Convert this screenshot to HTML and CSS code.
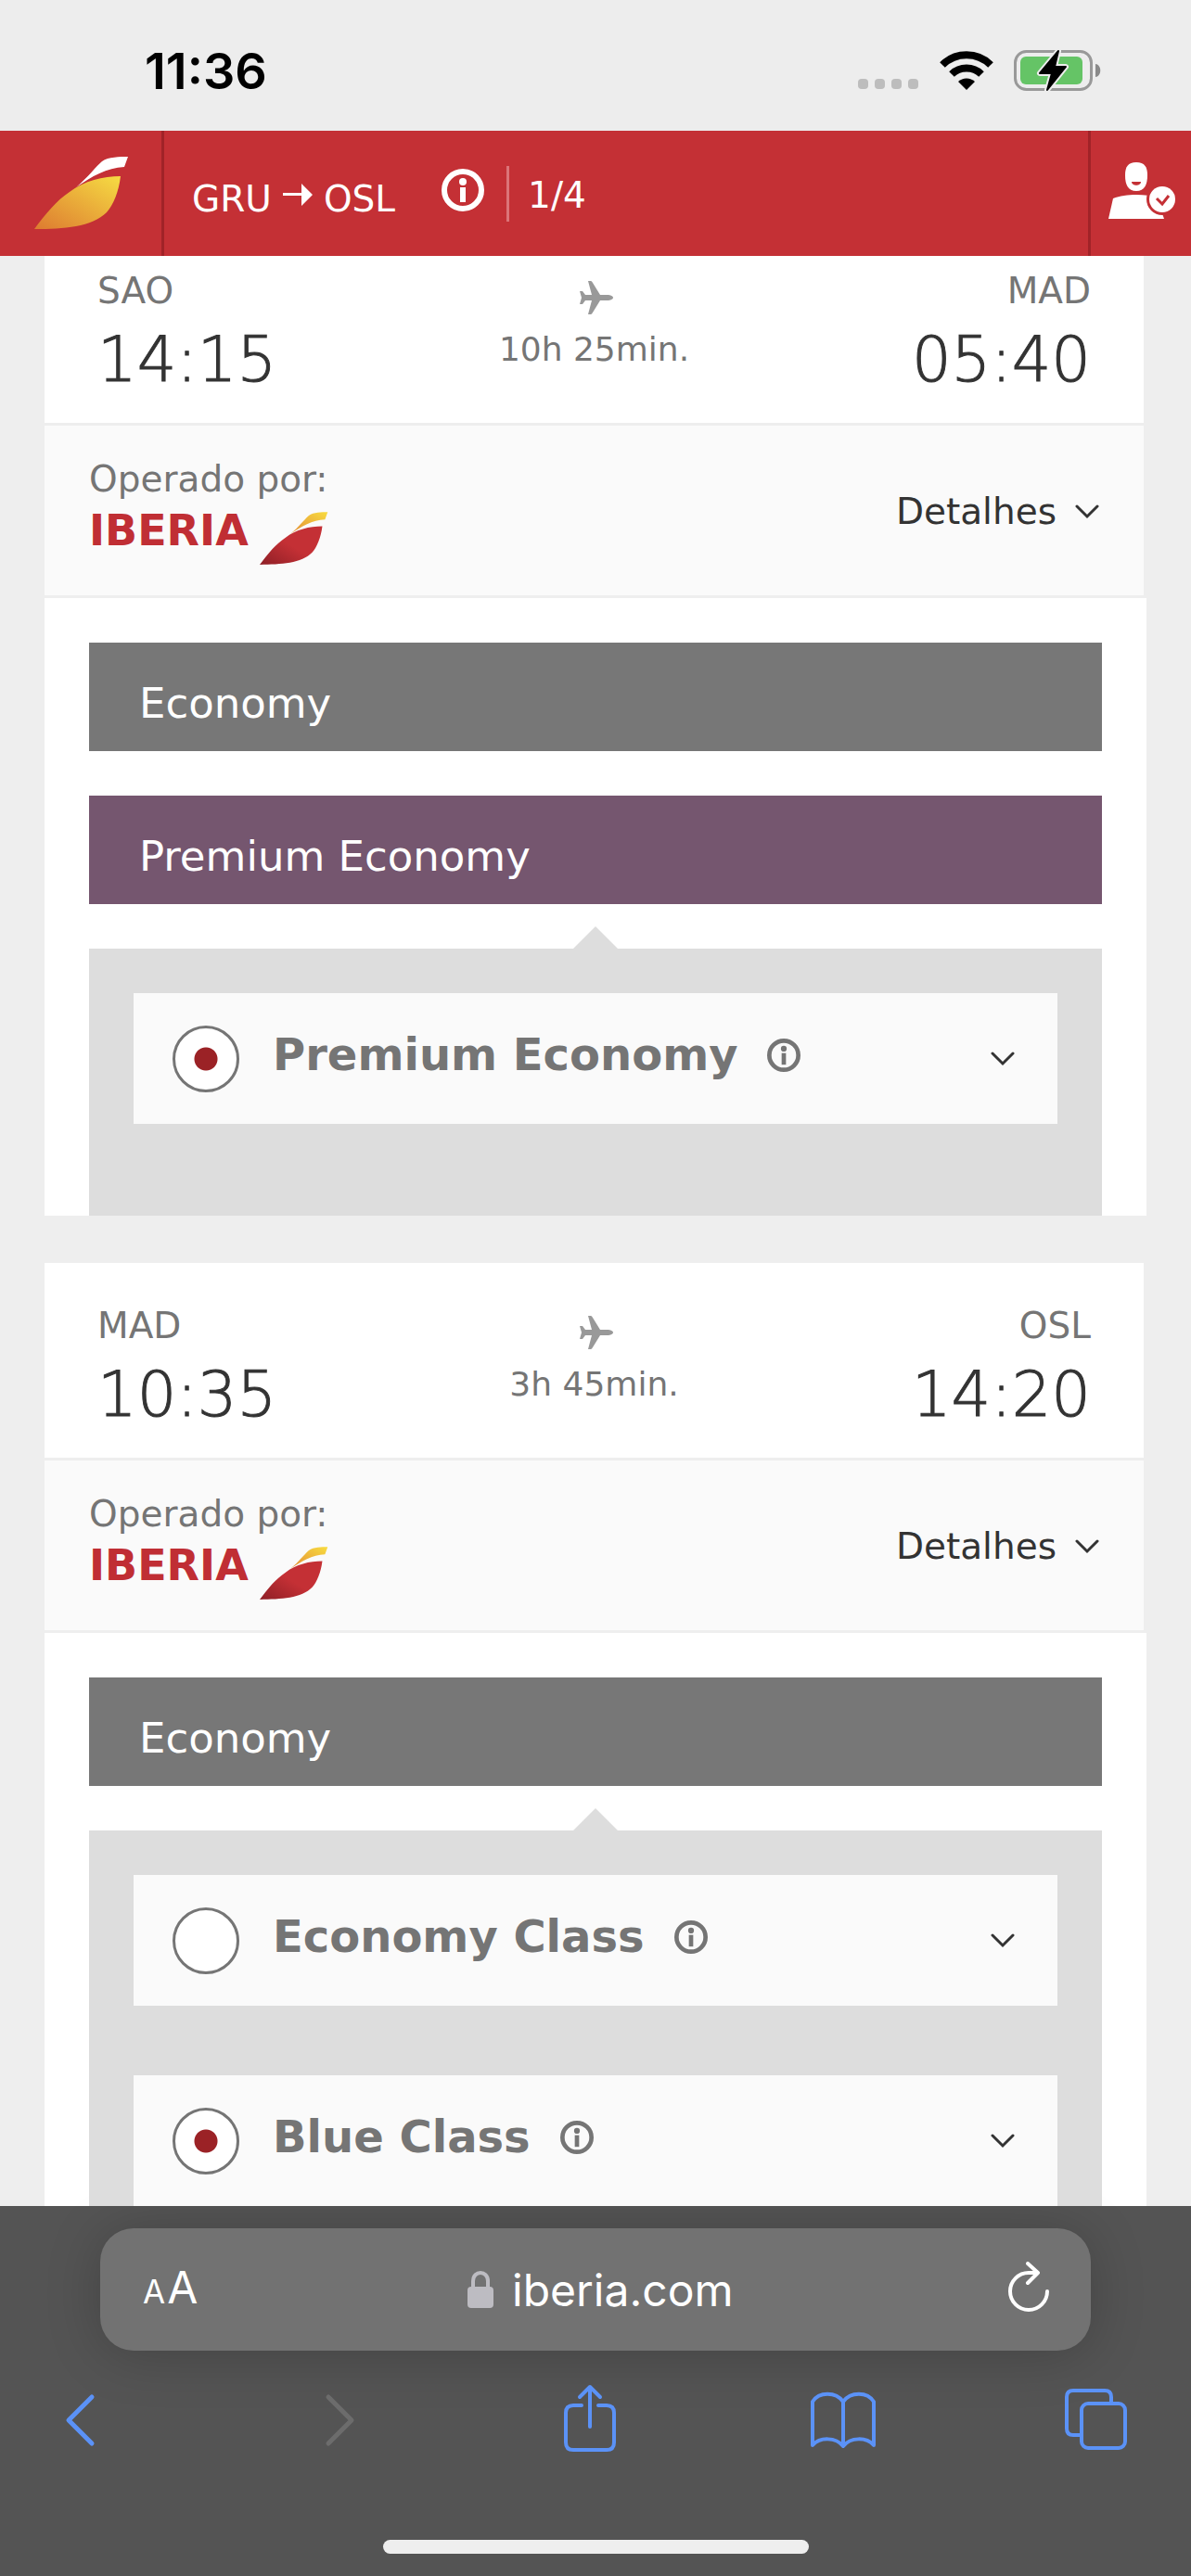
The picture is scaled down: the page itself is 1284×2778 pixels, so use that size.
FILE: index.html
```html
<!DOCTYPE html>
<html lang="pt">

<head>
    <meta charset="UTF-8">
    <meta name="viewport" content="width=device-width, initial-scale=1.0">
    <title>Iberia</title>
    <link rel="stylesheet" href="styles.css">
</head>

<body>
    <!-- shared icons -->
    <svg class="symbols" aria-hidden="true">
        <defs>
            <linearGradient id="gold" x1="0" y1="1" x2="1" y2="0">
                <stop offset="0" stop-color="#dd7a30" />
                <stop offset="1" stop-color="#f6dc43" />
            </linearGradient>
            <linearGradient id="red" x1="0" y1="1" x2="1" y2="0">
                <stop offset="0" stop-color="#8e1f26" />
                <stop offset="0.5" stop-color="#c43035" />
                <stop offset="1" stop-color="#c43035" />
            </linearGradient>
            <linearGradient id="yellow" x1="0" y1="1" x2="1" y2="0">
                <stop offset="0" stop-color="#e28a35" />
                <stop offset="1" stop-color="#f8dc40" />
            </linearGradient>
        </defs>
        <symbol id="info" viewBox="0 0 46 46">
            <circle cx="23" cy="23" r="20" fill="none" stroke="currentColor" stroke-width="6" />
            <circle cx="23" cy="14" r="4" fill="currentColor" />
            <path d="M20 20h6v16h-6z" fill="currentColor" />
        </symbol>
        <symbol id="chevron" viewBox="0 0 26 16">
            <path d="M2 2l11 11L24 2" fill="none" stroke="currentColor" stroke-width="3" stroke-linecap="round" />
        </symbol>
        <symbol id="plane" viewBox="0 0 40 36">
            <path d="M13 0h3q1 0 2 2l8 13h9q5 1 5 3t-5 3h-9l-8 13q-1 2-2 2h-3l4-15h-7l-3 4H4l2-7-2-7h3l3 4h7z" fill="#999" />
        </symbol>
        <symbol id="leaf" viewBox="0 0 102 79">
            <path d="M45 33C58 22 66 11 73 5 80 0 92 0 101 0l-4 11C78 12 62 21 45 33z" fill="url(#yellow)" />
            <path d="M0 78C12 62 24 47 38 38 54 26 74 21 93 21 91 38 85 52 78 60 62 76 32 78 0 78z" fill="url(#red)" />
        </symbol>
    </svg>

    <div class="status-bar">
        <span class="clock">11:36</span>
        <div class="status-icons">
            <svg width="66" height="44" viewBox="0 0 66 44" fill="#bdbdbd">
                <rect x="0" y="31" width="11" height="11" rx="4" />
                <rect x="18" y="31" width="11" height="11" rx="4" />
                <rect x="36" y="31" width="11" height="11" rx="4" />
                <rect x="54" y="31" width="11" height="11" rx="4" />
            </svg>
            <svg width="58" height="44" viewBox="0 0 58 44">
                <path d="M3 16a37 37 0 0 1 52 0" fill="none" stroke="#000" stroke-width="8" />
                <path d="M13 26a23 23 0 0 1 32 0" fill="none" stroke="#000" stroke-width="8" />
                <path d="M20 34a13 13 0 0 1 18 0l-9 9z" />
            </svg>
            <svg width="95" height="46" viewBox="0 0 95 46">
                <rect x="1.5" y="2.5" width="82" height="41" rx="12" fill="none" stroke="#999" stroke-width="3" />
                <rect x="7" y="8" width="67" height="30" rx="6" fill="#65c466" />
                <path d="M88 16c7 1 7 13 0 14z" fill="#8a8a8a" />
                <path d="M48 2L28 26h13l-5 18 20-25H44z" fill="#000" stroke="#ededed" stroke-width="6" stroke-linejoin="round" />
                <path d="M48 2L28 26h13l-5 18 20-25H44z" fill="#000" stroke="#000" stroke-width="2" stroke-linejoin="round" />
            </svg>
        </div>
    </div>

    <header class="site-header">
        <a href="#" class="home" aria-label="Iberia">
            <svg width="102" height="79" viewBox="0 0 102 79">
                <path d="M45 33C58 22 66 11 73 5 80 0 92 0 101 0l-4 11C78 12 62 21 45 33z" fill="#fff" />
                <path d="M0 78C12 62 24 47 38 38 54 26 74 21 93 21 91 38 85 52 78 60 62 76 32 78 0 78z" fill="url(#gold)" />
            </svg>
        </a>
        <div class="trip">
            <div class="route">
                <span>GRU</span>
                <svg width="32" height="24" viewBox="0 0 32 24" fill="#fff">
                    <path d="M0 10h20V0l12 12-12 12V13H0z" />
                </svg>
                <span>OSL</span>
            </div>
            <button class="trip-info" aria-label="Info"><svg width="46" height="46"><use href="#info" /></svg></button>
            <span class="step">1/4</span>
        </div>
        <a href="#" class="user" aria-label="User">
            <svg width="74" height="62" viewBox="0 0 74 62">
                <path d="M30 0C39 0 42 5 42 14 42 24 39 31 30 31S18 24 18 14C18 5 21 0 30 0z" fill="#fff" />
                <path d="M25 21h10c0 5-10 5-10 0z" fill="#c43035" />
                <path d="M0 61L5 39C18 34 40 34 52 38L60 61z" fill="#fff" />
                <circle cx="58" cy="40" r="17" fill="#c43035" />
                <circle cx="58" cy="40" r="14" fill="#fff" />
                <path d="M52 39l6 6 7-9" fill="none" stroke="#c43035" stroke-width="3" />
            </svg>
        </a>
    </header>

    <main>
        <section class="leg scrolled">
            <div class="times">
                <div class="place">
                    <span class="airport">SAO</span>
                    <span class="time">14:15</span>
                </div>
                <div class="duration">
                    <svg width="40" height="36"><use href="#plane" /></svg>
                    <span>10h 25min.</span>
                </div>
                <div class="place arrival">
                    <span class="airport">MAD</span>
                    <span class="time">05:40</span>
                </div>
            </div>
            <div class="operator">
                <div class="company">
                    <span>Operado por:</span>
                    <div class="logo">
                        <span>IBERIA</span>
                        <svg width="74" height="58"><use href="#leaf" /></svg>
                    </div>
                </div>
                <button class="details">Detalhes <svg width="26" height="16"><use href="#chevron" /></svg></button>
            </div>
            <div class="cabins">
                <button class="cabin">Economy</button>
                <button class="cabin premium">Premium Economy</button>
                <div class="fares">
                    <div class="fare">
                        <input type="radio" name="leg1" id="premium-economy" checked>
                        <label for="premium-economy">Premium Economy</label>
                        <button class="fare-info" aria-label="Info"><svg width="36" height="36"><use href="#info" /></svg></button>
                        <button class="fare-open" aria-label="Abrir"><svg width="26" height="16"><use href="#chevron" /></svg></button>
                    </div>
                </div>
            </div>
        </section>

        <section class="leg">
            <div class="times">
                <div class="place">
                    <span class="airport">MAD</span>
                    <span class="time">10:35</span>
                </div>
                <div class="duration">
                    <svg width="40" height="36"><use href="#plane" /></svg>
                    <span>3h 45min.</span>
                </div>
                <div class="place arrival">
                    <span class="airport">OSL</span>
                    <span class="time">14:20</span>
                </div>
            </div>
            <div class="operator">
                <div class="company">
                    <span>Operado por:</span>
                    <div class="logo">
                        <span>IBERIA</span>
                        <svg width="74" height="58"><use href="#leaf" /></svg>
                    </div>
                </div>
                <button class="details">Detalhes <svg width="26" height="16"><use href="#chevron" /></svg></button>
            </div>
            <div class="cabins">
                <button class="cabin">Economy</button>
                <div class="fares">
                    <div class="fare">
                        <input type="radio" name="leg2" id="economy-class">
                        <label for="economy-class">Economy Class</label>
                        <button class="fare-info" aria-label="Info"><svg width="36" height="36"><use href="#info" /></svg></button>
                        <button class="fare-open" aria-label="Abrir"><svg width="26" height="16"><use href="#chevron" /></svg></button>
                    </div>
                    <div class="fare">
                        <input type="radio" name="leg2" id="blue-class" checked>
                        <label for="blue-class">Blue Class</label>
                        <button class="fare-info" aria-label="Info"><svg width="36" height="36"><use href="#info" /></svg></button>
                        <button class="fare-open" aria-label="Abrir"><svg width="26" height="16"><use href="#chevron" /></svg></button>
                    </div>
                </div>
            </div>
        </section>
    </main>

    <footer class="browser-bar">
        <div class="address">
            <button class="text-size"><small>A</small>A</button>
            <div class="url">
                <svg width="28" height="40" viewBox="0 0 28 40">
                    <path d="M6 18v-7c0-12 16-12 16 0v7" fill="none" stroke="#bdbcc2" stroke-width="4" />
                    <rect x="0" y="17" width="28" height="23" rx="4" fill="#bdbcc2" />
                </svg>
                <input type="text" value="iberia.com" aria-label="URL">
            </div>
            <button class="reload" aria-label="Reload">
                <svg width="46" height="56" viewBox="0 0 46 56" fill="none" stroke="#fff" stroke-width="4" stroke-linecap="round" stroke-linejoin="round">
                    <path d="M43 32a20 20 0 1 1-20-20h9M22 2l11 10-11 11" />
                </svg>
            </button>
        </div>
        <nav class="tools">
            <button aria-label="Back"><svg width="80" height="80" viewBox="0 0 80 80"><path d="M53 15L28 40l25 25" stroke-width="5" /></svg></button>
            <button class="off" aria-label="Forward" disabled><svg width="80" height="80" viewBox="0 0 80 80"><path d="M34 15l25 25-25 25" stroke-width="5" /></svg></button>
            <button aria-label="Share"><svg width="80" height="80" viewBox="0 0 80 80"><path d="M33 24h-9q-8 0-8 8v32q0 8 8 8h36q8 0 8-8V32q0-8-8-8h-9M42 47V4M31 15L42 4l11 11" /></svg></button>
            <button aria-label="Bookmarks"><svg width="80" height="80" viewBox="0 0 80 80"><path d="M41 20C33 9 15 9 8 20v47c8-9 25-9 33 1V20c8-11 26-11 33 0v47c-8-9-25-9-33 1" /></svg></button>
            <button aria-label="Tabs"><svg width="80" height="80" viewBox="0 0 80 80"><path d="M22 56h-7q-7 0-7-7V15q0-7 7-7h34q7 0 7 7v7" /><rect x="24" y="22" width="47" height="48" rx="7" /></svg></button>
        </nav>
        <div class="home-indicator"></div>
    </footer>
</body>

</html>
```
FILE: styles.css
```css
* {
    margin: 0;
    padding: 0;
    box-sizing: border-box;
}

body {
    display: flex;
    flex-direction: column;
    height: 100vh;
    font-family: Verdana, "DejaVu Sans", sans-serif;
    font-size: 39px;
    line-height: 48px;
    color: #757575;
    background-color: #eee;
}

button {
    border: none;
    background: none;
    font: inherit;
    color: inherit;
}

a {
    text-decoration: none;
}

svg {
    display: block;
    flex-shrink: 0;
}

.symbols {
    position: absolute;
    width: 0;
    height: 0;
}

/* phone status bar */
.status-bar {
    display: flex;
    flex-shrink: 0;
    justify-content: space-between;
    align-items: center;
    height: 141px;
    padding: 10px 96px 0 156px;
    background-color: #ededed;
}

.clock {
    padding-top: 2px;
    font-family: Inter, sans-serif;
    font-size: 54px;
    font-weight: 600;
    color: #000;
}

.status-icons {
    display: flex;
    align-items: center;
    gap: 22px;
}

/* red header */
.site-header {
    display: flex;
    flex-shrink: 0;
    height: 135px;
    color: #fff;
    background-color: #c43035;
}

.home {
    display: flex;
    align-items: center;
    width: 177px;
    padding-left: 37px;
    border-right: 3px solid #a12328;
}

.trip {
    display: flex;
    flex: 1;
    align-items: center;
    padding-left: 30px;
}

.route {
    display: flex;
    align-items: center;
    gap: 12px;
    padding-top: 12px;
}

.route svg {
    margin-bottom: 9px;
}

.trip-info {
    margin: 0 24px 8px 50px;
}

.step {
    padding: 8px 0 4px 20px;
    border-left: 3px solid #dc7478;
}

.user {
    display: flex;
    align-items: center;
    justify-content: center;
    width: 111px;
    padding: 0 0 6px 3px;
    border-left: 3px solid #a12328;
}

/* flight legs */
main {
    flex: 1;
    min-height: 0;
    padding: 0 48px;
    overflow: hidden;
}

.leg {
    margin-bottom: 51px;
}

.scrolled {
    margin-top: -30px;
}

.times {
    display: grid;
    grid-template-columns: 1fr auto 1fr;
    margin-right: 3px;
    padding: 44px 57px 28px;
    border-bottom: 3px solid #eee;
    background-color: #fff;
}

.place {
    display: flex;
    flex-direction: column;
    gap: 10px;
}

.arrival {
    align-items: flex-end;
}

.time {
    font-size: 67px;
    font-weight: 200;
    line-height: 80px;
    color: #333;
    -webkit-text-stroke: 1px #333;
}

.duration {
    display: flex;
    flex-direction: column;
    align-items: center;
    gap: 14px;
    padding-top: 13px;
    font-size: 36px;
}

.operator {
    display: flex;
    justify-content: space-between;
    align-items: center;
    margin-right: 3px;
    padding: 34px 48px 32px;
    border-bottom: 3px solid #eee;
    background-color: #fafafa;
}

.company {
    display: flex;
    flex-direction: column;
    gap: 11px;
}

.logo {
    display: flex;
    justify-content: space-between;
    font-size: 46px;
    font-weight: bold;
    line-height: 40px;
    color: #c02e34;
}

.details {
    display: flex;
    align-items: center;
    gap: 20px;
    color: #333;
}

.cabins {
    display: flex;
    flex-direction: column;
    gap: 48px;
    padding: 48px 48px 0;
    background-color: #fff;
}

.cabin {
    height: 117px;
    padding: 14px 54px 0;
    font-size: 45px;
    text-align: left;
    color: #fff;
    background-color: #777;
}

.premium {
    background-color: #75566f;
}

.fares {
    position: relative;
    display: flex;
    flex-direction: column;
    gap: 75px;
    padding: 48px 48px 99px;
    background-color: #ddd;
}

.fares::before {
    content: "";
    position: absolute;
    top: -24px;
    left: 50%;
    margin-left: -24px;
    border: 24px solid transparent;
    border-top: none;
    border-bottom-color: #ddd;
}

.fare {
    display: flex;
    align-items: center;
    height: 141px;
    padding: 0 46px 0 42px;
    background-color: #fafafa;
}

.fare input {
    appearance: none;
    width: 72px;
    height: 72px;
    border: 3px solid #757575;
    border-radius: 50%;
    background-color: #fff;
}

.fare input:checked {
    background-image: radial-gradient(circle, #9b2226 12px, transparent 13px);
}

.fare label {
    padding: 0 32px 9px 36px;
    font-size: 48px;
    font-weight: bold;
}

.fare-info {
    padding-bottom: 8px;
}

.fare-open {
    margin-left: auto;
    color: #333;
}

/* browser toolbar */
.browser-bar {
    flex-shrink: 0;
    padding: 24px 0;
    color: #fff;
    background-color: #545454;
}

.address {
    display: grid;
    grid-template-columns: 1fr auto 1fr;
    align-items: center;
    height: 132px;
    margin: 0 108px;
    padding: 0 44px 0 46px;
    border-radius: 36px;
    font-family: Inter, sans-serif;
    background-color: #727272;
    box-shadow: 0 4px 60px rgba(0, 0, 0, 0.2);
}

.text-size {
    justify-self: start;
    font-size: 48px;
}

.text-size small {
    margin-right: 2px;
    font-size: 35px;
}

.url {
    display: flex;
    align-items: center;
    gap: 20px;
    padding-left: 12px;
}

.url input {
    width: 242px;
    border: none;
    font-family: inherit;
    font-size: 48px;
    color: #fff;
    background: none;
}

.reload {
    justify-self: end;
    padding-bottom: 4px;
}

.tools {
    display: flex;
    justify-content: space-between;
    padding: 35px 62px 0 46px;
}

.tools svg {
    fill: none;
    stroke: #5b92f7;
    stroke-width: 4;
    stroke-linecap: round;
    stroke-linejoin: round;
}

.tools .off svg {
    stroke: #6c6c6c;
}

.home-indicator {
    width: 459px;
    height: 15px;
    margin: 89px auto 0;
    border-radius: 8px;
    background-color: #eee;
}
```
